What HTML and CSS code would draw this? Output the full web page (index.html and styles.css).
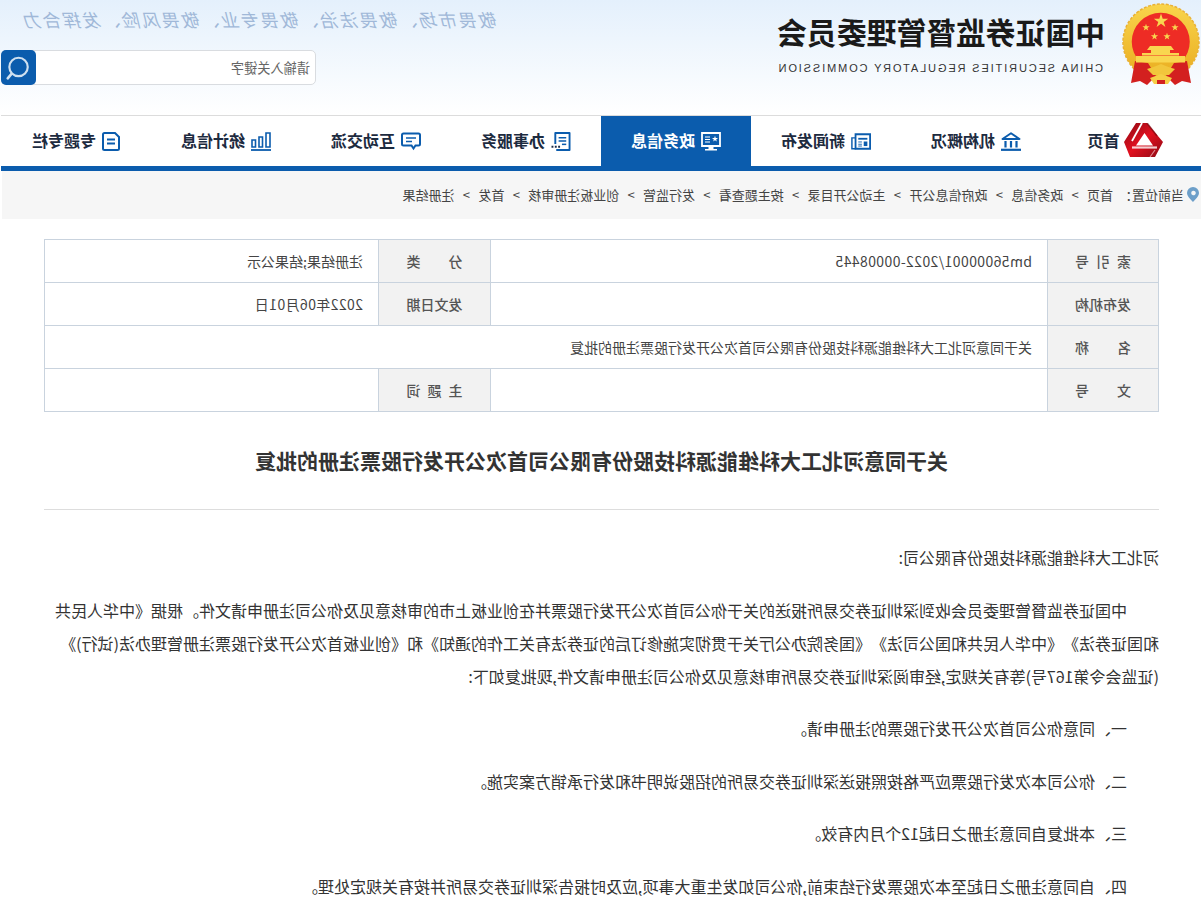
FILE: index.html
```html
<!DOCTYPE html>
<html lang="zh-CN">
<head>
<meta charset="utf-8">
<title>关于同意河北工大科维能源科技股份有限公司首次公开发行股票注册的批复</title>
<link rel="stylesheet" href="styles.css">
</head>
<body>
<div class="page">
  <header class="top">
    <div class="brand">
      <svg class="emblem" viewBox="0 0 78 83" aria-hidden="true">
        <defs>
          <linearGradient id="gold" x1="0" y1="0" x2="0" y2="1"><stop offset="0" stop-color="#f9d54c"/><stop offset="1" stop-color="#e9ab1e"/></linearGradient>
          <polygon id="st" points="0,-1 .225,-.309 .951,-.309 .363,.118 .588,.809 0,.382 -.588,.809 -.363,.118 -.951,-.309 -.225,-.309"/>
        </defs>
        <circle cx="39" cy="39" r="38" fill="url(#gold)" stroke="#e9b135" stroke-width="1.500" stroke-dasharray="3 1.500"/>
        <path d="M18.500 59A29 29 0 1 1 60 59Z" fill="#ee2c25"/>
        <path d="M13 58L9 80L18 78L25 82L34 73L26 60Z" fill="#d3201f"/>
        <path d="M65 58L69 80L60 78L53 82L44 73L52 60Z" fill="#d3201f"/>
        <g fill="#f9d64f">
          <use href="#st" transform="translate(39 18) scale(7.500)"/>
          <use href="#st" transform="translate(25 24.500) scale(3.800)"/>
          <use href="#st" transform="translate(54 24.500) scale(3.800)"/>
          <use href="#st" transform="translate(33 33.500) scale(3.800)"/>
          <use href="#st" transform="translate(45.500 33.500) scale(3.800)"/>
          <path d="M29 43H50L53 47H49V50H58V52.500H21V50H30V47H26Z"/>
          <path d="M15 53H64V59.500H15Z"/>
        </g>
        <path d="M25 66C31 64 35 63 39 61C43 63 47 64 53 66L47 72H31Z" fill="#f2c63c"/>
        <path d="M28 75L39 71L50 75L46 81H32Z" fill="#f6cf47"/>
        <path d="M35 77H43V81H35Z" fill="#d3201f"/>
      </svg>
      <div class="brand-text">
        <h1 class="brand-cn">中国证券监督管理委员会</h1>
        <p class="brand-en">CHINA SECURITIES REGULATORY COMMISSION</p>
      </div>
    </div>
    <div class="top-side">
      <p class="slogan">敬畏市场、敬畏法治、敬畏专业、敬畏风险、发挥合力</p>
      <div class="search">
        <span class="search-hint">请输入关键字</span>
        <span class="search-btn">
          <svg class="search-icon" viewBox="0 0 24 24" aria-hidden="true">
            <circle cx="11.500" cy="11" r="8.500" fill="none" stroke="#cfe0f0" stroke-width="2"/>
            <path d="M18 17.500L21.500 21.500" stroke="#cfe0f0" stroke-width="2.400" stroke-linecap="round"/>
          </svg>
        </span>
      </div>
    </div>
  </header>

  <nav class="nav">
    <a class="nav-item nav-home">
      <svg class="logo" viewBox="0 0 39 35" aria-hidden="true">
        <defs>
          <linearGradient id="lg" x1="0" y1="0" x2="1" y2="1"><stop offset="0" stop-color="#8a0a14"/><stop offset=".5" stop-color="#e2101f"/><stop offset="1" stop-color="#8b0a14"/></linearGradient>
        </defs>
        <g transform="translate(39 0) scale(-1 1)">
          <path fill="url(#lg)" fill-rule="evenodd" d="M12 0H23L39 19L31 34H6L0 19ZM20.500 10L12 22.500H29Z"/>
          <path d="M18 0L8 18" stroke="#fff" stroke-width="1.800"/>
          <path d="M8 24.500L33 24.500" stroke="#fff" stroke-width="2.200" opacity=".8"/>
          <path d="M23 0L33 13" stroke="#7a0810" stroke-width="1.600" opacity=".7"/>
          <path d="M31 27L26 34" stroke="#f6c2c6" stroke-width="1.200" opacity=".7"/>
        </g>
      </svg>
      <span>首页</span>
    </a>
    <a class="nav-item">
      <svg class="ni" viewBox="0 0 20 19" aria-hidden="true">
        <path d="M10 1.200L1.500 7H18.500Z" fill="none" stroke="currentColor" stroke-width="1.900" stroke-linejoin="round"/>
        <path d="M4.500 9V15.500M10 9V15.500M15.500 9V15.500" stroke="currentColor" stroke-width="2.200"/>
        <path d="M0 17.800H20" stroke="currentColor" stroke-width="2.200"/>
      </svg>
      <span>机构概况</span>
    </a>
    <a class="nav-item">
      <svg class="ni" viewBox="0 0 22 18" aria-hidden="true">
        <path d="M1 1H17V17H1Z" fill="none" stroke="currentColor" stroke-width="2"/>
        <path d="M17 5H21V17H17" fill="none" stroke="currentColor" stroke-width="1.600"/>
        <path d="M4 5H14V7H4Z" fill="currentColor"/>
        <path d="M4 9H8V14H4Z" fill="currentColor"/>
        <path d="M10 9.500H14M10 12H14M10 14H14" stroke="currentColor"/>
      </svg>
      <span>新闻发布</span>
    </a>
    <a class="nav-item is-active">
      <svg class="ni" viewBox="0 0 20 19" aria-hidden="true">
        <path d="M1 1H19V14H1Z" fill="none" stroke="currentColor" stroke-width="1.800"/>
        <use href="#st" fill="currentColor" transform="translate(6 7) scale(3.200)"/>
        <path d="M11 5H16M11 7.500H16M11 10H16" stroke="currentColor"/>
        <path d="M7.500 15H12.500V17H7.500ZM4 17H16V18.500H4Z" fill="currentColor"/>
      </svg>
      <span>政务信息</span>
    </a>
    <a class="nav-item">
      <svg class="ni" viewBox="0 0 20 20" aria-hidden="true">
        <path d="M16 12.500V1H1V19H15" fill="none" stroke="currentColor" stroke-width="2" stroke-linejoin="round"/>
        <path d="M4.500 6H12.500M4.500 9.500H12.500" stroke="currentColor" stroke-width="1.600"/>
        <path d="M4.500 13H9" stroke="currentColor" stroke-width="1.600"/>
        <path d="M11 15.500H13M14.500 15.500H16.500M18 15.500H20" stroke="#1a2c48" stroke-width="2"/>
      </svg>
      <span>办事服务</span>
    </a>
    <a class="nav-item">
      <svg class="ni" viewBox="0 0 20 18" aria-hidden="true">
        <path d="M2.500 1H17.500A1.500 1.500 0 0 1 19 2.500V11.500A1.500 1.500 0 0 1 17.500 13H9.500L7.500 16L5.500 13H2.500A1.500 1.500 0 0 1 1 11.500V2.500A1.500 1.500 0 0 1 2.500 1Z" fill="none" stroke="currentColor" stroke-width="2"/>
        <path d="M5 5.500H15M9 9H15" stroke="currentColor" stroke-width="1.500"/>
      </svg>
      <span>互动交流</span>
    </a>
    <a class="nav-item">
      <svg class="ni" viewBox="0 0 20 19" aria-hidden="true">
        <path d="M1 1H5V15H1ZM8.500 5H12V15H8.500ZM15.500 8H19V15H15.500Z" fill="none" stroke="currentColor" stroke-width="1.600"/>
        <path d="M0 18H20" stroke="currentColor" stroke-width="1.800"/>
      </svg>
      <span>统计信息</span>
    </a>
    <a class="nav-item">
      <svg class="ni ni-doc" viewBox="0 0 18 19" aria-hidden="true">
        <path d="M5 1H15.500A1.500 1.500 0 0 1 17 2.500V16.500A1.500 1.500 0 0 1 15.500 18H2.500A1.500 1.500 0 0 1 1 16.500V5Z" fill="none" stroke="currentColor" stroke-width="2"/>
        <path d="M5 7.500H13M5 11.500H13" stroke="currentColor" stroke-width="2"/>
      </svg>
      <span>专题专栏</span>
    </a>
  </nav>

  <div class="crumb">
    <svg class="pin" viewBox="0 0 12 15" aria-hidden="true">
      <path d="M6 0A6 6 0 0 0 0 6C0 9.500 6 15 6 15C6 15 12 9.500 12 6A6 6 0 0 0 6 0ZM6 8.200A2.300 2.300 0 1 1 6 3.700A2.300 2.300 0 0 1 6 8.200Z" fill="#6d9fc9" fill-rule="evenodd"/>
    </svg>
    <span class="crumb-head">当前位置：</span>
    <span>首页 &gt; 政务信息 &gt; 政府信息公开 &gt; 主动公开目录 &gt; 按主题查看 &gt; 发行监管 &gt; 创业板注册审核 &gt; 首发 &gt; 注册结果</span>
  </div>

  <main class="main">
    <table class="meta">
      <colgroup><col class="c-th1"><col class="c-a"><col class="c-th"><col class="c-b"></colgroup>
      <tr>
        <th><span class="lb">索引号</span></th><td class="num">bm56000001/2022-00008445</td>
        <th><span class="lb">分类</span></th><td>注册结果;结果公示</td>
      </tr>
      <tr>
        <th><span class="lb">发布机构</span></th><td></td>
        <th><span class="lb">发文日期</span></th><td class="num">2022年06月01日</td>
      </tr>
      <tr>
        <th><span class="lb">名称</span></th><td colspan="3">关于同意河北工大科维能源科技股份有限公司首次公开发行股票注册的批复</td>
      </tr>
      <tr>
        <th><span class="lb">文号</span></th><td></td>
        <th><span class="lb">主题词</span></th><td></td>
      </tr>
    </table>

    <h2 class="title">关于同意河北工大科维能源科技股份有限公司首次公开发行股票注册的批复</h2>

    <article class="doc">
      <p class="lead">河北工大科维能源科技股份有限公司:</p>
      <p>中国证券监督管理委员会收到深圳证券交易所报送的关于你公司首次公开发行股票并在创业板上市的审核意见及你公司注册申请文件。根据《中华人民共和国证券法》《中华人民共和国公司法》《国务院办公厅关于贯彻实施修订后的证券法有关工作的通知》和《创业板首次公开发行股票注册管理办法(试行)》<span class="keep">(证监会令第167号)</span>等有关规定,经审阅深圳证券交易所审核意见及你公司注册申请文件,现批复如下:</p>
      <p>一、同意你公司首次公开发行股票的注册申请。</p>
      <p>二、你公司本次发行股票应严格按照报送深圳证券交易所的招股说明书和发行承销方案实施。</p>
      <p>三、本批复自同意注册之日起12个月内有效。</p>
      <p>四、自同意注册之日起至本次股票发行结束前,你公司如发生重大事项,应及时报告深圳证券交易所并按有关规定处理。</p>
    </article>
  </main>
</div>
</body>
</html>
```

FILE: styles.css
```css
* { box-sizing: border-box; }
html, body { margin: 0; padding: 0; background: #fff; overflow-x: hidden; }
body { font-family: "Noto Sans CJK SC", "Noto Sans", sans-serif; color: #333; text-spacing-trim: space-all; }
.page { width: 1201px; transform: scaleX(-1); }

.top {
  height: 115px;
  display: flex;
  justify-content: space-between;
  background: linear-gradient(#e4f0fc, #fff);
  padding: 3px 1px 0 1px;
}
.brand { display: flex; gap: 17px; }
.emblem { width: 78px; height: 83px; display: block; }
.brand-text { padding-top: 10px; width: 330px; }
.brand-cn { margin: 0; font-size: 29.800px; line-height: 37px; font-weight: 700; color: #1a1a1a; white-space: nowrap; }
.brand-en { margin: 11px 0 0 2px; font-size: 11px; line-height: 14px; letter-spacing: 1.870px; color: #333; white-space: nowrap; font-family: "Liberation Sans", sans-serif; }
.top-side { width: 497px; display: flex; flex-direction: column; align-items: flex-end; }
.slogan { margin: 3px 0 0; width: 497px; font-size: 18px; line-height: 26px; letter-spacing: 1.800px; font-style: italic; font-weight: 400; color: #a0b8d8; white-space: nowrap; }
.search { margin-top: 18px; width: 315px; height: 35px; background: #fff; border: 1px solid #d9dce0; border-radius: 5px; display: flex; align-items: center; justify-content: space-between; padding-left: 5px; font-size: 13.200px; color: #666; }
.search-btn { width: 35px; height: 35px; margin: -1px -1px -1px 0; background: #0b5cad; border-radius: 5px; display: flex; align-items: center; justify-content: center; }
.search-icon { width: 26px; height: 26px; }

.nav { display: flex; height: 56px; margin: 0 1px 0 0; border-top: 1px solid #dcdcdc; border-bottom: 5px solid #0b5cad; background: #fff; }
.nav-item { width: 150px; display: flex; align-items: center; justify-content: center; gap: 6px; font-size: 16px; font-weight: 700; color: #1d2b3f; }
.nav-item span { margin-bottom: 2px; }
.nav-item .ni { color: #0b5cad; width: 20px; height: 19px; flex: none; }
.nav-item .ni-doc { width: 18px; }
.nav-item.is-active { background: #0b5cad; color: #fff; }
.nav-item.is-active .ni { color: #fff; }
.nav-home { gap: 4px; padding-left: 2px; }
.logo { width: 39px; height: 35px; flex: none; margin-bottom: 1px; }

.crumb { height: 48px; width: 1199px; background: #f6f6f6; display: flex; align-items: center; padding: 0 0 2px 2px; font-size: 13px; color: #444; white-space: nowrap; word-spacing: 5.380px; }
.pin { width: 12px; height: 15px; flex: none; margin-right: 3px; }
.crumb-head { margin-right: 6px; }

.main { padding: 20px 44px 0 42px; }
.meta { width: 1114px; border-collapse: collapse; table-layout: fixed; font-size: 14px; color: #444; }
.c-th1 { width: 111px; }
.c-th { width: 112px; }
.c-a { width: 557px; }
.c-b { width: 334px; }
.meta th, .meta td { height: 43px; border: 1px solid #c9d3de; padding: 0; }
.meta th { background: #f2f2f2; font-size: 14px; font-weight: 500; color: #555; }
.meta td { padding-left: 15px; text-align: left; }
.meta .num { letter-spacing: .4px; }
.lb { display: block; width: 56px; margin: 0 auto; text-align: justify; text-align-last: justify; }

.title { margin: 32px 0 0; padding-bottom: 32px; border-bottom: 1px solid #ddd; width: 1115px; text-align: center; font-size: 21px; line-height: 33px; font-weight: 700; color: #333; }
.doc { width: 1115px; padding-top: 31px; font-size: 16px; line-height: 33px; color: #333; }
.doc p { margin: 0 0 19.500px; text-indent: 32px; }
.doc .lead { text-indent: 0; }
.keep { white-space: nowrap; }
```
